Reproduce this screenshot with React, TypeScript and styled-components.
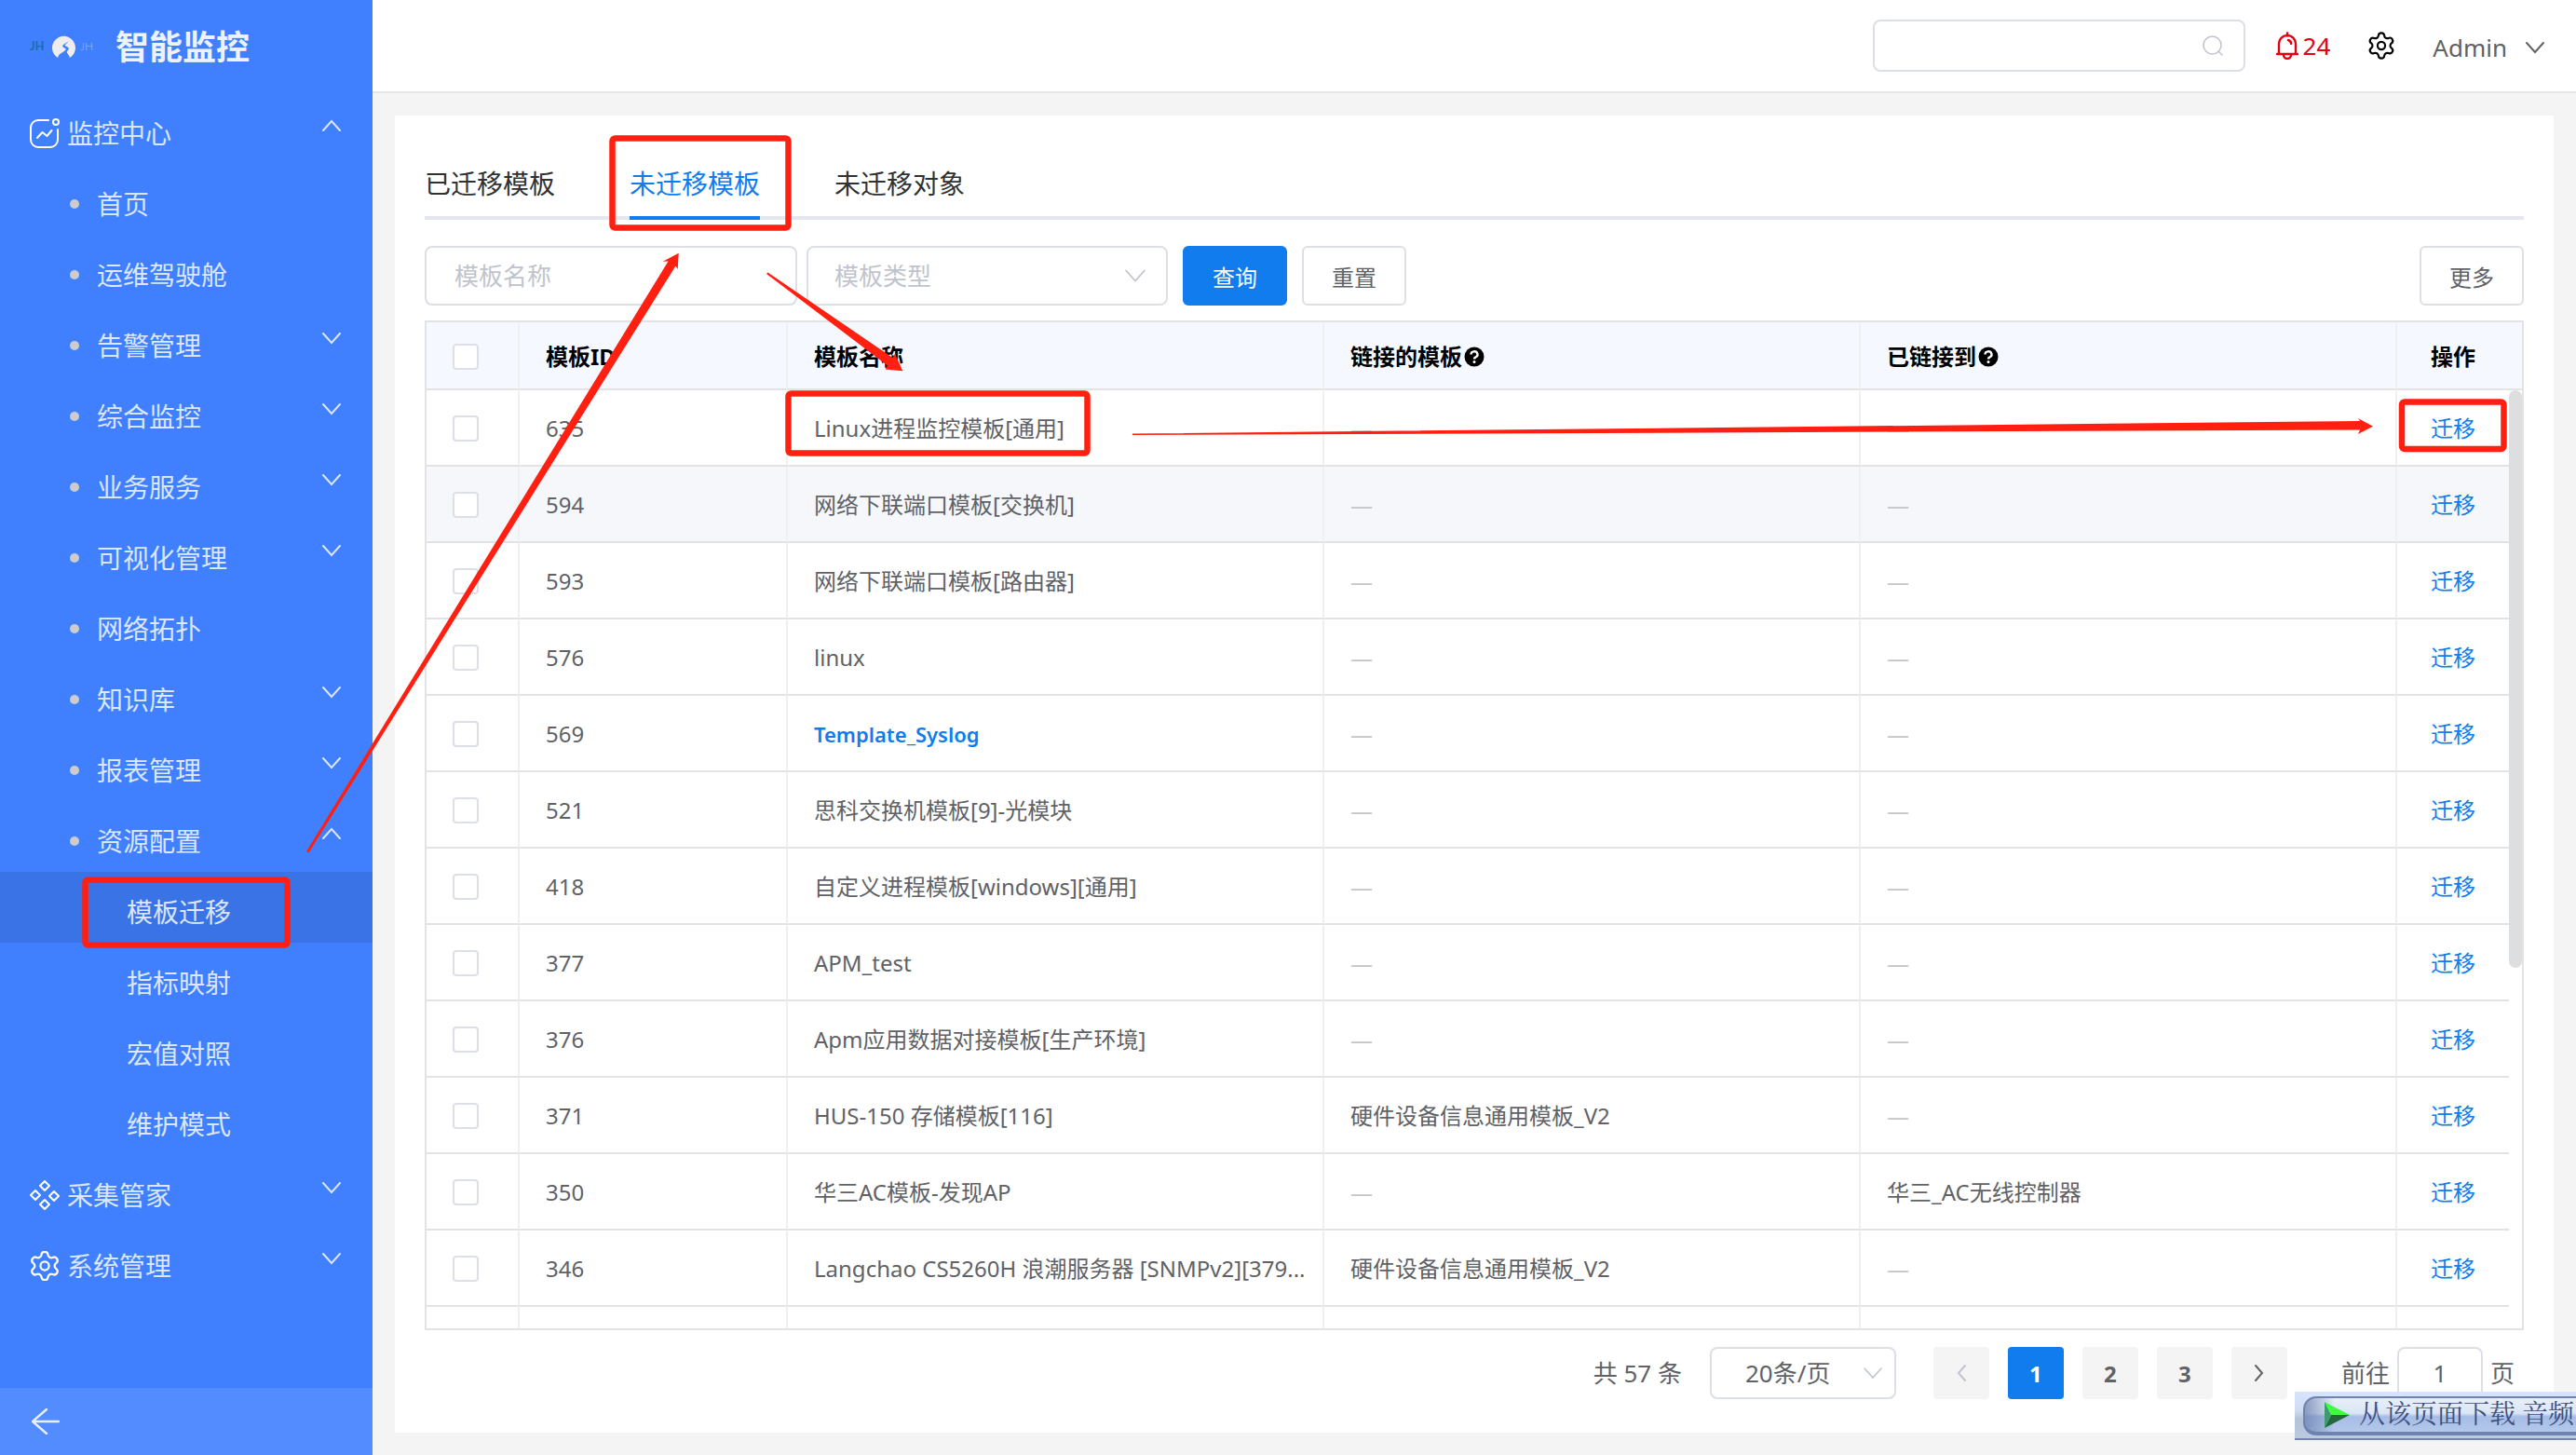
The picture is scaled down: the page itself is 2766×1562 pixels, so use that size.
import React, { useState } from "react";
import styled, { createGlobalStyle, css } from "styled-components";

const sans = `"Noto Sans", "Noto Sans CJK SC", sans-serif`;
const blue = "#107cee";
const line = "#e3e3e4";
const fieldLine = "#dcdfe6";
const textColor = "#606266";
const mark = "#ff2012";

const GlobalStyle = createGlobalStyle`
  *, *::before, *::after { box-sizing: border-box; }
  body { margin: 0; font-family: ${sans}; color: ${textColor}; }
  button, input, select { font-family: inherit; color: inherit; }
  ul { list-style: none; margin: 0; padding: 0; }
`;

/* ---------- shell ---------- */

const Shell = styled.div`
  display: flex;
  height: 100vh;
  background: #f4f4f4;
  overflow: hidden;
  position: relative;
`;

const Sidebar = styled.aside`
  flex: 0 0 400px;
  display: flex;
  flex-direction: column;
  background: #4080ff;
`;

const Brand = styled.div`
  display: flex;
  align-items: center;
  gap: 24px;
  height: 100px;
  padding: 2px 32px 0;
`;

const BrandName = styled.h1`
  margin: 0;
  font-size: 36px;
  line-height: 48px;
  font-weight: 700;
  color: #ecf2ff;
`;

const Nav = styled.nav`
  flex: 1;
  min-height: 0;
`;

const indents = { 1: 32, 2: 75, 3: 136 } as const;

const NavButton = styled.button<{ $level: 1 | 2 | 3; $active?: boolean }>`
  display: flex;
  align-items: center;
  width: 100%;
  height: 76px;
  padding: 10px 34px 0 ${(p) => indents[p.$level]}px;
  border: 0;
  background: ${(p) => (p.$active ? "#3a73e6" : "transparent")};
  color: #dbe6ff;
  font-size: 28px;
  line-height: 40px;
  text-align: left;
  cursor: pointer;
`;

const NavIcon = styled.svg`
  width: 32px;
  height: 32px;
  margin-right: 8px;
  color: #fff;
  flex: none;
`;

const Bullet = styled.span`
  width: 10px;
  height: 10px;
  margin-right: 19px;
  border-radius: 50%;
  background: #ccc;
  flex: none;
`;

const NavArrow = styled.span`
  display: flex;
  margin-left: auto;
  margin-bottom: 16px;
`;

const Collapse = styled.button`
  display: flex;
  align-items: center;
  height: 72px;
  padding: 0 34px;
  border: 0;
  background: #528cff;
  color: #e6eeff;
  cursor: pointer;
`;

const Page = styled.div`
  flex: 1;
  min-width: 0;
  display: flex;
  flex-direction: column;
`;

const TopBar = styled.header`
  display: flex;
  align-items: center;
  justify-content: flex-end;
  height: 100px;
  padding: 0 34px;
  border-bottom: 2px solid #e6e6e6;
  background: #fff;
`;

const SearchBox = styled.label`
  display: flex;
  align-items: center;
  width: 400px;
  height: 56px;
  padding: 0 22px;
  margin-right: 32px;
  border: 2px solid ${fieldLine};
  border-radius: 8px;
  color: #c0c4cc;
`;

const SearchInput = styled.input`
  flex: 1;
  min-width: 0;
  border: 0;
  outline: 0;
  background: none;
  font-size: 26px;
`;

const AlarmButton = styled.button`
  display: flex;
  align-items: center;
  gap: 4px;
  padding: 0;
  margin-right: 40px;
  border: 0;
  background: none;
  color: #e60012;
  font-size: 26px;
  line-height: 40px;
`;

const PlainButton = styled.button`
  display: flex;
  align-items: center;
  padding: 0;
  margin-right: 40px;
  border: 0;
  background: none;
  color: #000;
`;

const UserButton = styled.button`
  display: flex;
  align-items: center;
  gap: 20px;
  padding: 4px 0 0;
  border: 0;
  background: none;
  color: ${textColor};
  font-size: 26px;
  line-height: 40px;
`;

/* ---------- content card ---------- */

const Content = styled.main`
  flex: 1;
  min-height: 0;
  display: flex;
  padding: 24px;
`;

const Card = styled.section`
  flex: 1;
  min-width: 0;
  display: flex;
  flex-direction: column;
  padding: 32px 32px 36px;
  background: #fff;
`;

const Tabs = styled.div`
  display: flex;
  gap: 80px;
  flex: none;
  height: 80px;
  border-bottom: 4px solid #e4e7ed;
`;

const Tab = styled.button<{ $active: boolean }>`
  height: 80px;
  padding: 6px 0 0;
  border: 0;
  border-bottom: 4px solid ${(p) => (p.$active ? blue : "transparent")};
  background: none;
  color: ${(p) => (p.$active ? blue : "#303133")};
  font-size: 28px;
  line-height: 40px;
  cursor: pointer;
`;

const Filters = styled.form`
  display: flex;
  flex: none;
  gap: 16px;
  margin: 28px 0 16px;
`;

const FilterFields = styled.div`
  display: flex;
  gap: 10px;
`;

const fieldStyle = css`
  height: 64px;
  border: 2px solid ${fieldLine};
  border-radius: 8px;
  background: #fff;
  font-size: 26px;
  outline: 0;
`;

const TextField = styled.input`
  ${fieldStyle}
  width: 400px;
  padding: 0 30px;
  &::placeholder {
    color: #c0c4cc;
    opacity: 1;
  }
`;

const SelectWrap = styled.div<{ $width: number }>`
  position: relative;
  width: ${(p) => p.$width}px;
`;

const SelectField = styled.select<{ $compact?: boolean }>`
  ${fieldStyle}
  width: 100%;
  height: ${(p) => (p.$compact ? 56 : 64)}px;
  padding: 0 ${(p) => (p.$compact ? 36 : 28)}px;
  color: ${(p) => (p.$compact ? textColor : "#c0c4cc")};
  appearance: none;
`;

const SelectArrow = styled.span<{ $right: number }>`
  position: absolute;
  top: 50%;
  right: ${(p) => p.$right}px;
  display: flex;
  transform: translateY(-50%);
  color: #c0c4cc;
  pointer-events: none;
`;

const Button = styled.button<{ $primary?: boolean; $end?: boolean }>`
  width: 112px;
  height: 64px;
  padding: 0;
  border: 2px solid ${(p) => (p.$primary ? blue : fieldLine)};
  border-radius: 6px;
  background: ${(p) => (p.$primary ? blue : "#fff")};
  color: ${(p) => (p.$primary ? "#fff" : textColor)};
  font-size: 24px;
  margin-left: ${(p) => (p.$end ? "auto" : "0")};
  cursor: pointer;
`;

/* ---------- table ---------- */

const TableFrame = styled.div`
  position: relative;
  flex: 1;
  min-height: 0;
  border: 2px solid ${line};
`;

const TableScroll = styled.div`
  height: 100%;
  overflow: auto;
  scrollbar-width: none;
`;

const Thumb = styled.span`
  position: absolute;
  top: 73px;
  right: 0;
  width: 14px;
  height: 620px;
  border-radius: 7px;
  background: #dddee0;
`;

const Table = styled.table`
  width: 100%;
  table-layout: fixed;
  border-collapse: separate;
  border-spacing: 0;
  font-size: 24px;
  line-height: 36px;
`;

const Col = styled.col<{ $width?: number }>`
  width: ${(p) => (p.$width ? `${p.$width}px` : "auto")};
`;

const cell = css<{ $center?: boolean; $last?: boolean }>`
  padding: 2px ${(p) => (p.$center ? 28 : 12)}px 0 28px;
  border-bottom: 2px solid ${line};
  border-right: ${(p) => (p.$last ? "0" : "2px solid #f0f0f1")};
  text-align: ${(p) => (p.$center ? "center" : "left")};
  white-space: nowrap;
  overflow: hidden;
  text-overflow: ellipsis;
`;

const HeadCell = styled.th`
  ${cell}
  position: sticky;
  top: 0;
  height: 73px;
  background: #f5f8ff;
  color: #000;
  font-weight: 700;
`;

const HeadGutter = styled.th`
  padding: 0;
  border-bottom: 2px solid ${line};
  background: #f5f8ff;
`;

const HeadLabel = styled.span`
  display: flex;
  align-items: center;
  gap: 2px;
`;

const Row = styled.tr<{ $hover?: boolean }>`
  background: ${(p) => (p.$hover ? "#f5f7fa" : "#fff")};
`;

const Cell = styled.td`
  ${cell}
  height: 82px;
`;

const GutterCell = styled.td`
  padding: 0;
  background: #fff;
`;

const Check = styled.input`
  appearance: none;
  display: block;
  width: 28px;
  height: 28px;
  margin: 0;
  border: 2px solid ${fieldLine};
  border-radius: 4px;
  background: #fff;
`;

const Empty = styled.span`
  color: #c4c6ca;
`;

const Link = styled.a<{ $strong?: boolean }>`
  color: ${blue};
  font-size: ${(p) => (p.$strong ? 22 : 24)}px;
  font-weight: ${(p) => (p.$strong ? 600 : 400)};
  text-decoration: none;
`;

/* ---------- pagination ---------- */

const Pager = styled.div`
  display: flex;
  align-items: center;
  justify-content: flex-end;
  flex: none;
  height: 56px;
  margin-top: 18px;
  padding-right: 10px;
  font-size: 26px;
  line-height: 40px;
`;

const Total = styled.span`
  margin-right: 30px;
`;

const PageList = styled.div`
  display: flex;
  gap: 20px;
  margin: 0 58px 0 40px;
`;

const PageButton = styled.button<{ $active?: boolean }>`
  display: flex;
  align-items: center;
  justify-content: center;
  width: 60px;
  height: 56px;
  padding: 0;
  border: 0;
  border-radius: 4px;
  background: ${(p) => (p.$active ? blue : "#f4f4f5")};
  color: ${(p) => (p.$active ? "#fff" : textColor)};
  font-size: 24px;
  font-weight: 700;
  &:disabled {
    color: #c0c4cc;
  }
`;

const Jump = styled.label`
  display: flex;
  align-items: center;
  gap: 8px;
`;

const JumpInput = styled.input`
  ${fieldStyle}
  width: 92px;
  height: 56px;
  padding: 0;
  text-align: center;
`;

/* ---------- overlays ---------- */

const DownloadBar = styled.aside`
  position: absolute;
  right: 0;
  bottom: 16px;
  width: 302px;
  height: 52px;
  padding: 5px 0 5px 9px;
  overflow: hidden;
  border-bottom: 2px solid #7286ab;
  background: linear-gradient(#d6e4ff, #d0dcf2 40%, #b4c3da 60%, #bccadf);
`;

const DownloadButton = styled.button`
  display: flex;
  align-items: center;
  gap: 10px;
  width: 360px;
  height: 42px;
  padding: 0 0 0 20px;
  border: 2px solid #6f83b3;
  border-bottom-width: 4px;
  border-radius: 14px;
  background:
    linear-gradient(90deg, rgba(110, 130, 175, 0.75), rgba(255, 255, 255, 0) 32px),
    linear-gradient(#e8eff8, #dbe5f5 45%, #a6bde6 55%, #b3c8ea);
  color: #3d4f7c;
  font-family: "Liberation Serif", "Noto Serif CJK SC", "Noto Sans CJK SC", serif;
  font-size: 28px;
  line-height: 36px;
  white-space: nowrap;
`;

const Marks = styled.svg`
  position: absolute;
  inset: 0;
  width: 100%;
  height: 100%;
  pointer-events: none;
`;

/* ---------- drawings ---------- */

type ChevronProps = { dir: "up" | "down" | "left" | "right"; size?: number; weight?: number };

const chevrons = {
  up: "M1 15 10 5l9 10",
  down: "M1 5l9 10 9-10",
  left: "M14 2 7 10l7 8",
  right: "M6 2l7 8-7 8",
};

const Chevron = ({ dir, size = 20, weight = 2 }: ChevronProps) => (
  <svg width={size} height={size} viewBox="0 0 20 20" fill="none" stroke="currentColor" strokeWidth={weight} strokeLinecap="round">
    <path d={chevrons[dir]} />
  </svg>
);

const GearShape = () => (
  <>
    <path d="M9.671 4.136a2.34 2.34 0 0 1 4.659 0 2.34 2.34 0 0 0 3.319 1.915 2.34 2.34 0 0 1 2.33 4.033 2.34 2.34 0 0 0 0 3.831 2.34 2.34 0 0 1-2.33 4.033 2.34 2.34 0 0 0-3.319 1.915 2.34 2.34 0 0 1-4.659 0 2.34 2.34 0 0 0-3.32-1.915 2.34 2.34 0 0 1-2.33-4.033 2.34 2.34 0 0 0 0-3.831A2.34 2.34 0 0 1 6.35 6.051a2.34 2.34 0 0 0 3.319-1.915" />
    <circle cx="12" cy="12" r="3" />
  </>
);

const navIcons = {
  monitor: (
    <NavIcon viewBox="0 0 32 32" fill="none" stroke="currentColor" strokeWidth="2" strokeLinecap="round" strokeLinejoin="round">
      <path d="M20 2H9A8 8 0 0 0 1 10v13a8 8 0 0 0 8 8h13a8 8 0 0 0 8-8V12" />
      <circle cx="28" cy="4" r="3" />
      <path d="M8 21l5.500-6 5 4 5-6" />
    </NavIcon>
  ),
  collect: (
    <NavIcon viewBox="0 0 32 32" fill="none" stroke="currentColor" strokeWidth="2" strokeLinejoin="round">
      <path d="M16 1l5 5-5 5-5-5zM6 11l5 5-5 5-5-5zM26 12l5 5-5 5-5-5zM16 21l5 5-5 5-5-5z" />
    </NavIcon>
  ),
  system: (
    <NavIcon viewBox="1.5 1.5 21 21" fill="none" stroke="currentColor" strokeWidth="1.5">
      <GearShape />
    </NavIcon>
  ),
};

const Logo = () => (
  <svg width="68" height="30" viewBox="0 0 68 30" role="img" aria-label="JH">
    <text x="0" y="18" fontFamily="Lato, sans-serif" fontSize="13" fontWeight="700" fill="#1f6bb0">JH</text>
    <path d="M30 26a12.500 12.500 0 1 1 13 0c-1-4-4-5-3-7 2-2 3-3 0-5-2-1-3-1-2-2l4-4-6 4c-2 2 0 3 2 4s-1 3-4 5c-3 1-3 3-4 5z" fill="#eee" />
    <text x="54" y="18" fontFamily="Lato, sans-serif" fontSize="12" fontWeight="300" fill="#9fbcf0">JH</text>
  </svg>
);

const Help = () => (
  <svg width="22" height="22" viewBox="0 0 22 22">
    <circle cx="11" cy="11" r="10.500" fill="#000" />
    <path d="M7.500 8.500a3.500 3.200 0 1 1 5 2.900c-1.200.6-1.500 1-1.500 2.100" fill="none" stroke="#fff" strokeWidth="2.400" />
    <circle cx="11" cy="16.600" r="1.500" fill="#fff" />
  </svg>
);

const Bell = () => (
  <svg width="26" height="30" viewBox="0 0 26 30" fill="none" stroke="currentColor" strokeWidth="2.400" strokeLinecap="round" strokeLinejoin="round">
    <path d="M13 1.500v3M2 24h22M4 24V13a9 9 0 0 1 18 0v11" />
    <path d="M9 25a4 4 0 0 0 8 0M14 9a4 4 0 0 1 3 4" />
  </svg>
);

/* ---------- data ---------- */

type NavNode = { label: string; icon?: keyof typeof navIcons; level: 1 | 2 | 3; arrow?: "up" | "down"; active?: boolean };

const nav: NavNode[] = [
  { label: "监控中心", icon: "monitor", level: 1, arrow: "up" },
  { label: "首页", level: 2 },
  { label: "运维驾驶舱", level: 2 },
  { label: "告警管理", level: 2, arrow: "down" },
  { label: "综合监控", level: 2, arrow: "down" },
  { label: "业务服务", level: 2, arrow: "down" },
  { label: "可视化管理", level: 2, arrow: "down" },
  { label: "网络拓扑", level: 2 },
  { label: "知识库", level: 2, arrow: "down" },
  { label: "报表管理", level: 2, arrow: "down" },
  { label: "资源配置", level: 2, arrow: "up" },
  { label: "模板迁移", level: 3, active: true },
  { label: "指标映射", level: 3 },
  { label: "宏值对照", level: 3 },
  { label: "维护模式", level: 3 },
  { label: "采集管家", icon: "collect", level: 1, arrow: "down" },
  { label: "系统管理", icon: "system", level: 1, arrow: "down" },
];

type Template = { id: string; name: string; linked?: string; linkedTo?: string; strong?: boolean };

const templates: Template[] = [
  { id: "635", name: "Linux进程监控模板[通用]" },
  { id: "594", name: "网络下联端口模板[交换机]" },
  { id: "593", name: "网络下联端口模板[路由器]" },
  { id: "576", name: "linux" },
  { id: "569", name: "Template_Syslog", strong: true },
  { id: "521", name: "思科交换机模板[9]-光模块" },
  { id: "418", name: "自定义进程模板[windows][通用]" },
  { id: "377", name: "APM_test" },
  { id: "376", name: "Apm应用数据对接模板[生产环境]" },
  { id: "371", name: "HUS-150 存储模板[116]", linked: "硬件设备信息通用模板_V2" },
  { id: "350", name: "华三AC模板-发现AP", linkedTo: "华三_AC无线控制器" },
  { id: "346", name: "Langchao CS5260H 浪潮服务器 [SNMPv2][379...", linked: "硬件设备信息通用模板_V2" },
];

const tabs = ["已迁移模板", "未迁移模板", "未迁移对象"];

export default function App() {
  const [tab, setTab] = useState(1);
  return (
    <>
      <GlobalStyle />
      <Shell>
        <Sidebar>
          <Brand>
            <Logo />
            <BrandName>智能监控</BrandName>
          </Brand>
          <Nav>
            <ul>
              {nav.map((n) => (
                <li key={n.label}>
                  <NavButton $level={n.level} $active={n.active}>
                    {n.icon && navIcons[n.icon]}
                    {n.level === 2 && <Bullet />}
                    {n.label}
                    {n.arrow && (
                      <NavArrow>
                        <Chevron dir={n.arrow} />
                      </NavArrow>
                    )}
                  </NavButton>
                </li>
              ))}
            </ul>
          </Nav>
          <Collapse aria-label="收起">
            <svg width="30" height="28" viewBox="0 0 30 28" fill="none" stroke="currentColor" strokeWidth="2.400" strokeLinecap="round">
              <path d="M16 1 1 14l15 13M1 14h28" />
            </svg>
          </Collapse>
        </Sidebar>

        <Page>
          <TopBar>
            <SearchBox>
              <SearchInput aria-label="搜索" />
              <svg width="22" height="22" viewBox="0 0 22 22" fill="none" stroke="currentColor" strokeWidth="1.600" strokeLinecap="round">
                <circle cx="10.500" cy="10.500" r="9.500" />
                <path d="M17 17l4 4" />
              </svg>
            </SearchBox>
            <AlarmButton>
              <Bell />
              24
            </AlarmButton>
            <PlainButton aria-label="设置">
              <svg width="30" height="30" viewBox="1 1 22 22" fill="none" stroke="currentColor" strokeWidth="1.600">
                <GearShape />
              </svg>
            </PlainButton>
            <UserButton>
              Admin
              <Chevron dir="down" />
            </UserButton>
          </TopBar>

          <Content>
            <Card>
              <Tabs role="tablist">
                {tabs.map((t, i) => (
                  <Tab key={t} role="tab" aria-selected={i === tab} $active={i === tab} onClick={() => setTab(i)}>
                    {t}
                  </Tab>
                ))}
              </Tabs>

              <Filters onSubmit={(e) => e.preventDefault()}>
                <FilterFields>
                  <TextField placeholder="模板名称" aria-label="模板名称" />
                  <SelectWrap $width={388}>
                    <SelectField aria-label="模板类型" defaultValue="">
                      <option value="">模板类型</option>
                    </SelectField>
                    <SelectArrow $right={24}>
                      <Chevron dir="down" size={22} weight={1.6} />
                    </SelectArrow>
                  </SelectWrap>
                </FilterFields>
                <Button $primary type="submit">查询</Button>
                <Button type="reset">重置</Button>
                <Button $end type="button">更多</Button>
              </Filters>

              <TableFrame>
                <TableScroll>
                  <Table>
                    <colgroup>
                      <Col $width={100} />
                      <Col $width={288} />
                      <Col />
                      <Col />
                      <Col />
                      <Col $width={120} />
                      <Col $width={14} />
                    </colgroup>
                    <thead>
                      <tr>
                        <HeadCell>
                          <Check type="checkbox" aria-label="全选" />
                        </HeadCell>
                        <HeadCell>模板ID</HeadCell>
                        <HeadCell>模板名称</HeadCell>
                        <HeadCell>
                          <HeadLabel>链接的模板<Help /></HeadLabel>
                        </HeadCell>
                        <HeadCell>
                          <HeadLabel>已链接到<Help /></HeadLabel>
                        </HeadCell>
                        <HeadCell $center $last>操作</HeadCell>
                        <HeadGutter />
                      </tr>
                    </thead>
                    <tbody>
                      {templates.map((t, i) => (
                        <Row key={t.id} $hover={i === 1}>
                          <Cell>
                            <Check type="checkbox" aria-label={t.id} />
                          </Cell>
                          <Cell>{t.id}</Cell>
                          <Cell>{t.strong ? <Link href="#" $strong>{t.name}</Link> : t.name}</Cell>
                          <Cell>{t.linked ?? <Empty>—</Empty>}</Cell>
                          <Cell>{t.linkedTo ?? <Empty>—</Empty>}</Cell>
                          <Cell $center $last>
                            <Link href="#">迁移</Link>
                          </Cell>
                          <GutterCell />
                        </Row>
                      ))}
                      <Row>
                        <Cell />
                        <Cell />
                        <Cell />
                        <Cell />
                        <Cell />
                        <Cell $last />
                        <GutterCell />
                      </Row>
                    </tbody>
                  </Table>
                </TableScroll>
                <Thumb />
              </TableFrame>

              <Pager>
                <Total>共 57 条</Total>
                <SelectWrap $width={200}>
                  <SelectField $compact aria-label="每页条数" defaultValue="20">
                    <option value="20">20条/页</option>
                  </SelectField>
                  <SelectArrow $right={15}>
                    <Chevron dir="down" weight={1.6} />
                  </SelectArrow>
                </SelectWrap>
                <PageList>
                  <PageButton disabled aria-label="上一页">
                    <Chevron dir="left" />
                  </PageButton>
                  <PageButton $active>1</PageButton>
                  <PageButton>2</PageButton>
                  <PageButton>3</PageButton>
                  <PageButton aria-label="下一页">
                    <Chevron dir="right" />
                  </PageButton>
                </PageList>
                <Jump>
                  前往
                  <JumpInput defaultValue="1" />
                  页
                </Jump>
              </Pager>
            </Card>
          </Content>
        </Page>

        <DownloadBar>
          <DownloadButton>
            <svg width="28" height="28" viewBox="0 0 28 28">
              <path d="M1 0l27 14H8z" fill="#3dff3d" />
              <path d="M28 14L1 28 8 14z" fill="#25693a" />
              <path d="M1 0v28l7-14z" fill="#3b9a72" />
            </svg>
            从该页面下载 音频
          </DownloadButton>
        </DownloadBar>

        <Marks viewBox="0 0 2766 1562" preserveAspectRatio="none" aria-hidden="true">
          <g fill="none" stroke={mark} strokeWidth="6.500" strokeLinejoin="round">
            <rect x="91.500" y="944.500" width="217" height="70" rx="3" />
            <rect x="657.500" y="148.500" width="189" height="96" rx="3" />
            <rect x="846.500" y="422.500" width="321" height="64" rx="3" />
            <rect x="2579" y="431.500" width="109.500" height="50.500" rx="3" />
          </g>
          <g fill={mark}>
            <path d="M329 914 331.500 915.500 725.500 285.500 727.700 289 728.700 271.700 711.700 280.700 717.500 280.500z" />
            <path d="M823 294 824.500 292.500 958.500 384 961 380 969.300 398.300 950.500 396.500 953 392.500z" />
            <path d="M1216 465.500V467L2534 461.500 2532 466 2548 457.700 2532 449 2534 452z" />
          </g>
        </Marks>
      </Shell>
    </>
  );
}
